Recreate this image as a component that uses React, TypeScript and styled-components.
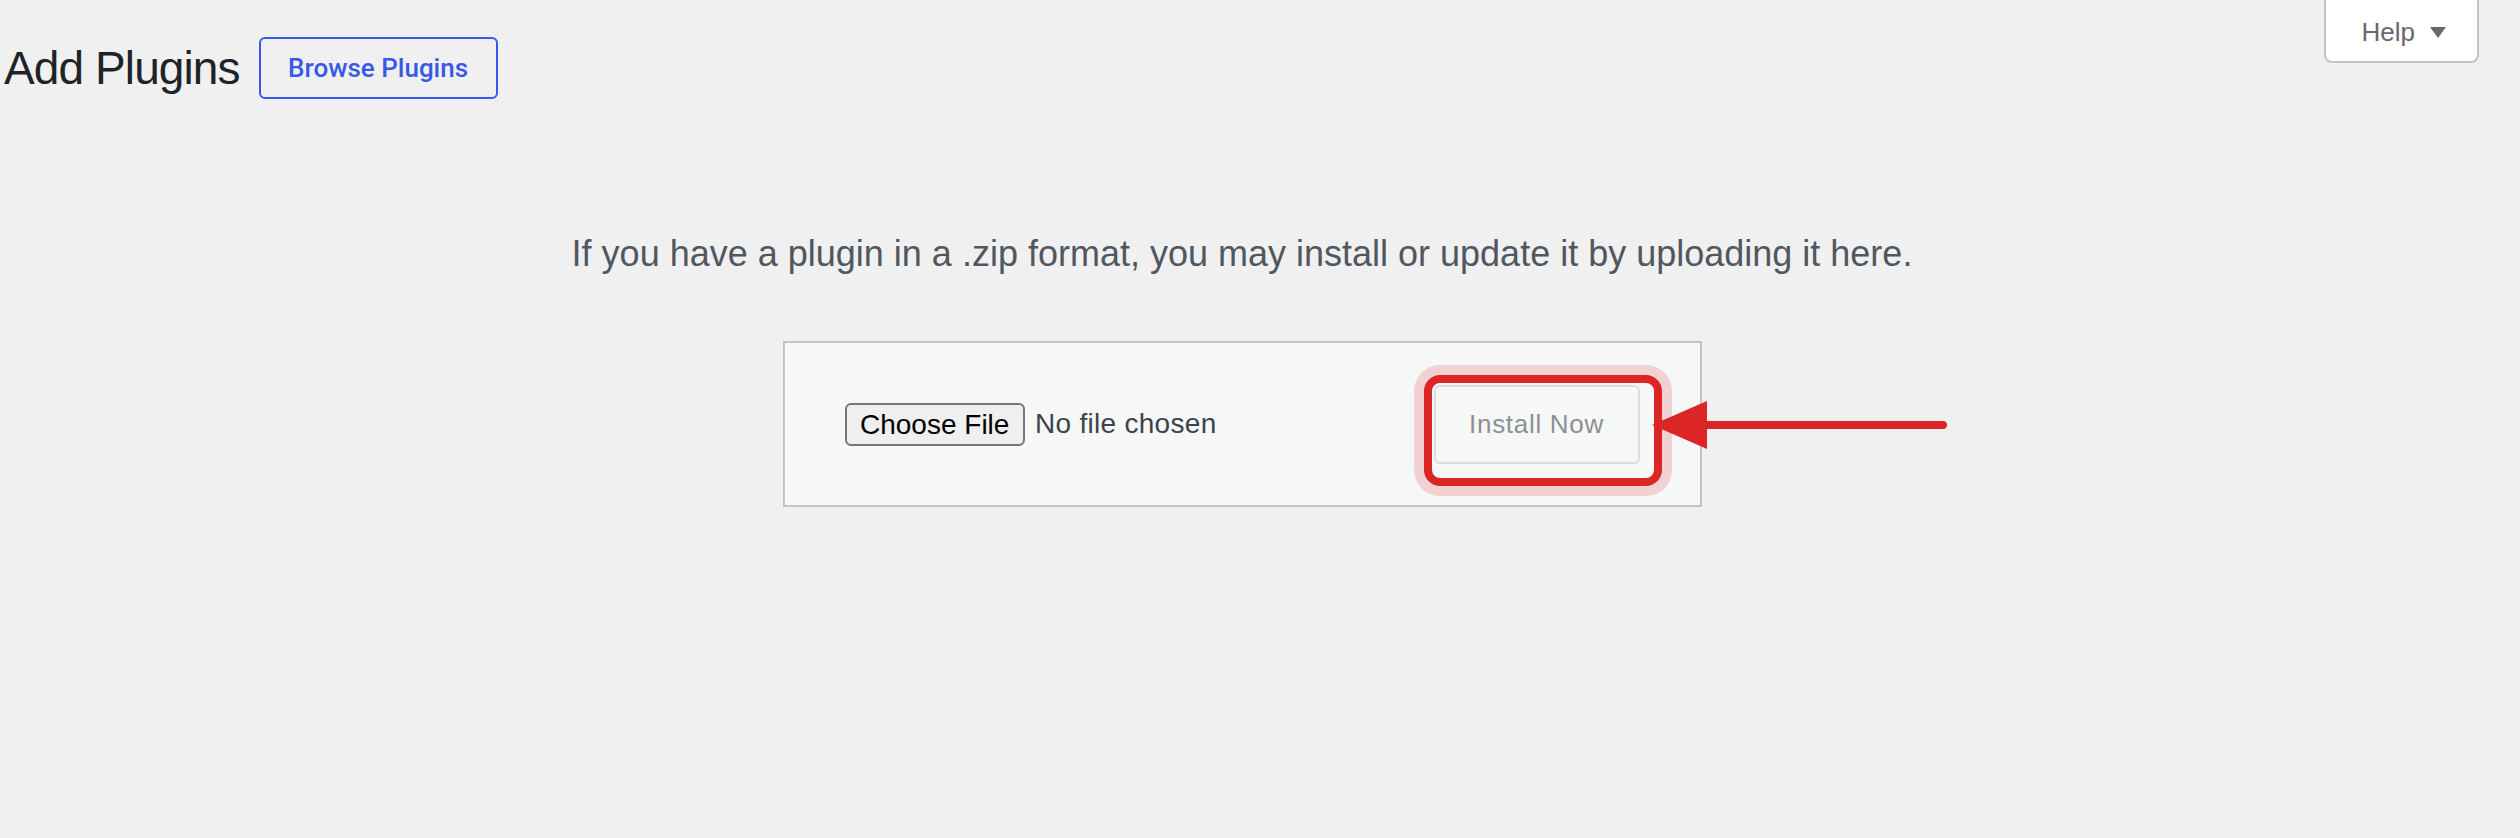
import React from "react";
import styled, { createGlobalStyle } from "styled-components";

const GlobalStyle = createGlobalStyle`
  html, body {
    margin: 0;
    padding: 0;
    background: #f0f0f1;
  }
  body {
    font-family: "Liberation Sans", Arial, sans-serif;
    color: #3c434a;
  }
  * { box-sizing: border-box; }
`;

const Page = styled.div`
  min-height: 838px;
  padding: 0 40px 0 4px;
`;

const TopBar = styled.div`
  display: flex;
  justify-content: space-between;
  align-items: flex-start;
  height: 99px;
`;

const TitleGroup = styled.div`
  display: flex;
  align-items: center;
  gap: 19px;
  margin-top: 37px;
`;

const Title = styled.h1`
  margin: 0;
  font-family: "Liberation Sans", Arial, sans-serif;
  font-size: 46px;
  line-height: 60px;
  font-weight: 400;
  letter-spacing: -0.9px;
  color: #1d2327;
`;

const OutlineButton = styled.button`
  height: 62px;
  padding: 0 27.5px;
  border: 2px solid #3858e9;
  border-radius: 6px;
  background: transparent;
  color: #3858e9;
  font-family: Roboto, "Liberation Sans", Arial, sans-serif;
  font-size: 26px;
  font-weight: 500;
  line-height: 58px;
  cursor: pointer;
`;

const HelpTab = styled.button`
  display: flex;
  align-items: center;
  gap: 15px;
  height: 63px;
  margin-right: 1px;
  padding: 4px 31px 0 36px;
  background: #ffffff;
  border: 2px solid #c3c4c7;
  border-top: none;
  border-radius: 0 0 8px 8px;
  color: #646970;
  font-family: "Liberation Sans", Arial, sans-serif;
  font-size: 26px;
  cursor: pointer;
`;

const Description = styled.p`
  margin: 128px 0 0;
  text-align: center;
  font-size: 36px;
  line-height: 54px;
  color: #50575e;
`;

const UploadBox = styled.form`
  width: 919px;
  height: 166px;
  margin: 60px auto 0;
  padding: 0 60px;
  display: flex;
  align-items: center;
  justify-content: space-between;
  background: #f6f7f7;
  border: 2px solid #c3c4c7;
`;

const FileField = styled.div`
  display: flex;
  align-items: center;
  gap: 10px;
`;

const ChooseButton = styled.button`
  height: 43px;
  padding: 0 13.5px;
  background: #efefef;
  border: 2px solid #767676;
  border-radius: 6px;
  color: #000000;
  font-family: "Liberation Sans", Arial, sans-serif;
  font-size: 28px;
  line-height: 39px;
  cursor: pointer;
`;

const FileStatus = styled.span`
  font-size: 28px;
  letter-spacing: 0.3px;
  color: #3c434a;
`;

const SubmitWrap = styled.div`
  position: relative;
  display: flex;
`;

const InstallButton = styled.button`
  width: 206px;
  height: 79px;
  background: #f6f7f7;
  border: 2px solid #dcdcde;
  border-radius: 6px;
  color: #8c8f94;
  font-family: "Liberation Sans", Arial, sans-serif;
  font-size: 26px;
  letter-spacing: 0.7px;
  cursor: default;
`;

const Highlight = styled.div`
  position: absolute;
  left: -10px;
  top: -10px;
  width: 238px;
  height: 111px;
  border: 8px solid #dc2626;
  border-radius: 16px;
  box-shadow: 0 0 0 10px rgba(220, 38, 38, 0.18);
  pointer-events: none;
`;

const Arrow = styled.svg`
  position: absolute;
  left: 217px;
  top: 14px;
  overflow: visible;
  pointer-events: none;
`;

export default function App() {
  return (
    <>
      <GlobalStyle />
      <Page>
        <TopBar>
          <TitleGroup>
            <Title>Add Plugins</Title>
            <OutlineButton type="button">Browse Plugins</OutlineButton>
          </TitleGroup>
          <HelpTab type="button">
            <span>Help</span>
            <svg width="16" height="11" viewBox="0 0 16 11" aria-hidden="true">
              <polygon points="0,0 16,0 8,11" fill="#646970" />
            </svg>
          </HelpTab>
        </TopBar>
        <Description>
          If you have a plugin in a .zip format, you may install or update it by uploading it here.
        </Description>
        <UploadBox onSubmit={(e) => e.preventDefault()}>
          <FileField>
            <ChooseButton type="button">Choose File</ChooseButton>
            <FileStatus>No file chosen</FileStatus>
          </FileField>
          <SubmitWrap>
            <InstallButton type="submit" disabled>
              Install Now
            </InstallButton>
            <Highlight />
            <Arrow width="296" height="52" viewBox="0 0 296 52" aria-hidden="true">
              <line
                x1="50"
                y1="26"
                x2="292"
                y2="26"
                stroke="#dc2626"
                strokeWidth="8"
                strokeLinecap="round"
              />
              <polygon points="1,26 56,2 56,50" fill="#dc2626" />
            </Arrow>
          </SubmitWrap>
        </UploadBox>
      </Page>
    </>
  );
}
